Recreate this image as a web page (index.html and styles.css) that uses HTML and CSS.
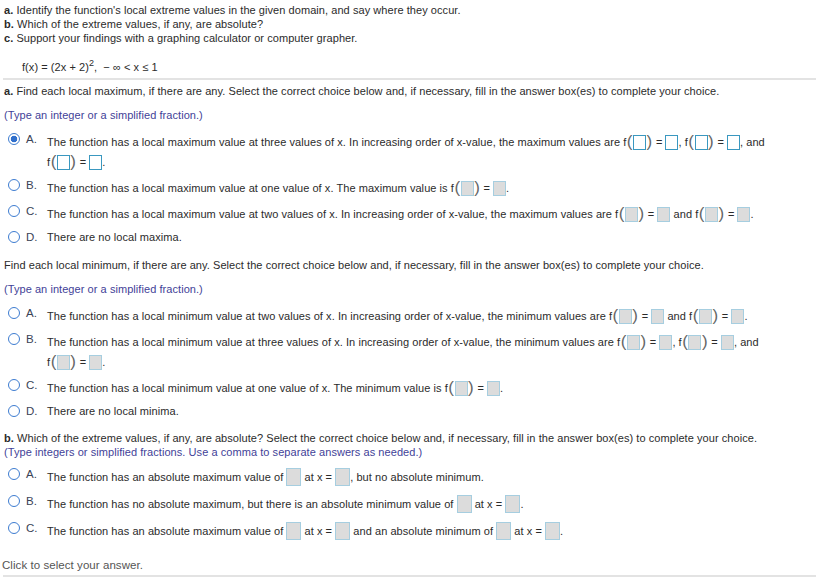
FILE: index.html
```html
<!DOCTYPE html>
<html lang="en">
<head>
<meta charset="UTF-8" />
<title>Local and absolute extrema</title>
<link rel="stylesheet" href="styles.css">
</head>
<body>
  <div class="question">
    <p class="intro">
      <b>a.</b> Identify the function's local extreme values in the given domain, and say where they occur.<br>
      <b>b.</b> Which of the extreme values, if any, are absolute?<br>
      <b>c.</b> Support your findings with a graphing calculator or computer grapher.
    </p>
    <p class="func">f(x) = (2x + 2)<sup>2</sup>, &nbsp;− ∞ &lt; x ≤ 1</p>
  </div>

  <hr class="sep">

  <!-- part a: local maxima -->
  <div class="part">
    <p class="prompt"><b>a.</b> Find each local maximum, if there are any. Select the correct choice below and, if necessary, fill in the answer box(es) to complete your choice.</p>
    <p class="hint">(Type an integer or a simplified fraction.)</p>
    <ul class="choices">
      <li class="choice tall selected">
        <span class="radio"></span><span class="letter">A.</span>
        <span class="text">The function has a local maximum value at three values of x. In increasing order of x-value, the maximum values are f<span class="paren">(</span><span class="box"></span><span class="paren">)</span> = <span class="box"></span>, f<span class="paren">(</span><span class="box"></span><span class="paren">)</span> = <span class="box"></span>, and<br>f<span class="paren">(</span><span class="box"></span><span class="paren">)</span> = <span class="box"></span>.</span>
      </li>
      <li class="choice tall">
        <span class="radio"></span><span class="letter">B.</span>
        <span class="text">The function has a local maximum value at one value of x. The maximum value is f<span class="paren">(</span><span class="box"></span><span class="paren">)</span> = <span class="box"></span>.</span>
      </li>
      <li class="choice tall">
        <span class="radio"></span><span class="letter">C.</span>
        <span class="text">The function has a local maximum value at two values of x. In increasing order of x-value, the maximum values are f<span class="paren">(</span><span class="box"></span><span class="paren">)</span> = <span class="box"></span> and f<span class="paren">(</span><span class="box"></span><span class="paren">)</span> = <span class="box"></span>.</span>
      </li>
      <li class="choice">
        <span class="radio"></span><span class="letter">D.</span>
        <span class="text">There are no local maxima.</span>
      </li>
    </ul>
  </div>

  <!-- part a: local minima -->
  <div class="part">
    <p class="prompt">Find each local minimum, if there are any. Select the correct choice below and, if necessary, fill in the answer box(es) to complete your choice.</p>
    <p class="hint">(Type an integer or a simplified fraction.)</p>
    <ul class="choices">
      <li class="choice tall">
        <span class="radio"></span><span class="letter">A.</span>
        <span class="text">The function has a local minimum value at two values of x. In increasing order of x-value, the minimum values are f<span class="paren">(</span><span class="box"></span><span class="paren">)</span> = <span class="box"></span> and f<span class="paren">(</span><span class="box"></span><span class="paren">)</span> = <span class="box"></span>.</span>
      </li>
      <li class="choice tall">
        <span class="radio"></span><span class="letter">B.</span>
        <span class="text">The function has a local minimum value at three values of x. In increasing order of x-value, the minimum values are f<span class="paren">(</span><span class="box"></span><span class="paren">)</span> = <span class="box"></span>, f<span class="paren">(</span><span class="box"></span><span class="paren">)</span> = <span class="box"></span>, and<br>f<span class="paren">(</span><span class="box"></span><span class="paren">)</span> = <span class="box"></span>.</span>
      </li>
      <li class="choice tall">
        <span class="radio"></span><span class="letter">C.</span>
        <span class="text">The function has a local minimum value at one value of x. The minimum value is f<span class="paren">(</span><span class="box"></span><span class="paren">)</span> = <span class="box"></span>.</span>
      </li>
      <li class="choice">
        <span class="radio"></span><span class="letter">D.</span>
        <span class="text">There are no local minima.</span>
      </li>
    </ul>
  </div>

  <!-- part b: absolute extrema -->
  <div class="part part-b">
    <p class="prompt"><b>b.</b> Which of the extreme values, if any, are absolute? Select the correct choice below and, if necessary, fill in the answer box(es) to complete your choice.</p>
    <p class="hint">(Type integers or simplified fractions. Use a comma to separate answers as needed.)</p>
    <ul class="choices">
      <li class="choice tall">
        <span class="radio"></span><span class="letter">A.</span>
        <span class="text">The function has an absolute maximum value of <span class="box big"></span> at x = <span class="box big"></span>, but no absolute minimum.</span>
      </li>
      <li class="choice tall">
        <span class="radio"></span><span class="letter">B.</span>
        <span class="text">The function has no absolute maximum, but there is an absolute minimum value of <span class="box big"></span> at x = <span class="box big"></span>.</span>
      </li>
      <li class="choice tall">
        <span class="radio"></span><span class="letter">C.</span>
        <span class="text">The function has an absolute maximum value of <span class="box big"></span> at x = <span class="box big"></span> and an absolute minimum of <span class="box big"></span> at x = <span class="box big"></span>.</span>
      </li>
    </ul>
  </div>

  <div class="footer">Click to select your answer.</div>
  <hr class="sep sep-bottom">
</body>
</html>
```

FILE: styles.css
```css
body {
  margin: 0;
  padding: 3px 4px 0;
  background: #fff;
  color: #2b2b2b;
  font-family: "Liberation Sans", Arial, sans-serif;
  font-size: 11px;
  line-height: 14px;
  letter-spacing: 0.06px;
}

p {
  margin: 0;
}

/* enunciado */
.intro b,
.prompt b {
  font-weight: bold;
}

.func {
  margin-top: 15px;
  padding-left: 18px;
}

.func sup {
  font-size: 9px;
  line-height: 0;
  vertical-align: 5px;
}

.sep {
  margin: 4px 0 0 -1px;
  border: none;
  height: 2px;
  background: #e3e3e3;
}

/* partes da questao */
.prompt {
  margin-top: 4px;
}

.part + .part .prompt {
  margin-top: 14px;
}

.part-b .prompt {
  margin-top: 13px !important;
}

.hint {
  margin-top: 10px;
  color: #3f3f98;
}

.part-b .hint {
  margin-top: 0;
}

.choices {
  list-style: none;
  margin: 10px 0 0;
  padding: 0;
}

.part-b .choices {
  margin-top: 8px;
}

.choice {
  display: flex;
  align-items: flex-start;
  margin-bottom: 6px;
  line-height: 14px;
}

.choice.tall {
  line-height: 20px;
}

.part-b .choice.tall {
  line-height: 21px;
}

/* radio desenhado em css */
.radio {
  flex: none;
  box-sizing: border-box;
  width: 12px;
  height: 12px;
  margin: 1px 0 0 4px;
  border: 1px solid #3d7cd0;
  border-radius: 50%;
  background: #fff;
}

.selected .radio {
  background: radial-gradient(circle, #2f6fcc 0, #2f6fcc 3px, #fff 3.6px);
}

.letter {
  flex: none;
  width: 21px;
  margin-left: 6px;
  line-height: 14px;
  font-size: 11.5px;
  color: #3a4356;
}

.text {
  flex: 1;
}

/* caixas de resposta */
.box {
  display: inline-block;
  box-sizing: border-box;
  width: 13px;
  height: 15px;
  vertical-align: middle;
  margin-top: -2px;
  border: 1px solid #a6cee0;
  background: #dcdcdc;
}

.selected .box {
  border-color: #3a98c0;
  background: #fff;
}

.box.big {
  width: 15px;
  height: 18px;
}

.paren {
  display: inline-block;
  font-size: 17px;
  line-height: 14px;
  vertical-align: middle;
  margin-top: -3px;
  color: #666;
  font-weight: 300;
  padding: 0 0.5px;
}

.footer {
  margin: 16px 0 0 -2px;
  color: #555;
  font-size: 11.5px;
}

.sep-bottom {
  margin-top: 3px;
}
```
